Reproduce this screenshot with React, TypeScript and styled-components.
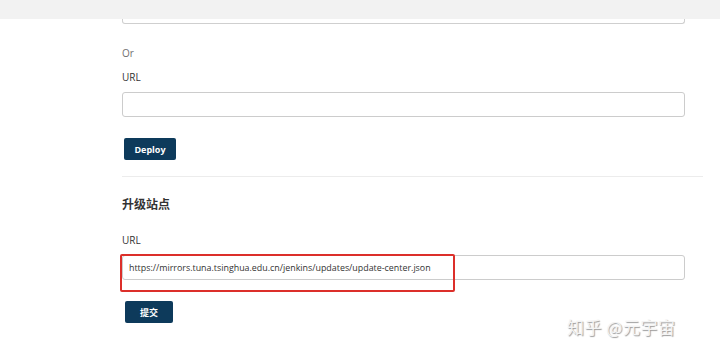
import styled, { createGlobalStyle } from 'styled-components';

const GlobalStyle = createGlobalStyle`
  html, body {
    margin: 0;
    padding: 0;
    background: #fff;
    font-family: "Open Sans", "Noto Sans", "Noto Sans CJK SC", sans-serif;
  }
`;

const Page = styled.div`
  position: relative;
  width: 720px;
  height: 359px;
  overflow: hidden;
  background: #fff;
`;

const Header = styled.div`
  height: 19px;
  background: #f2f2f2;
`;

const Content = styled.div`
  display: flex;
  flex-direction: column;
  align-items: flex-start;
  padding-left: 122px;
`;

const ClippedInput = styled.div`
  box-sizing: border-box;
  width: 563px;
  height: 5px;
  border: 1px solid #cfcfcf;
  border-top: none;
  border-radius: 0 0 3px 3px;
`;

const Hint = styled.div<{ $top: number }>`
  margin-top: ${p => p.$top}px;
  font-size: 10px;
  line-height: 14px;
  color: #707070;
`;

const Label = styled.div<{ $top: number }>`
  margin-top: ${p => p.$top}px;
  font-size: 10px;
  line-height: 14px;
  color: #333;
`;

const InputWrap = styled.div`
  position: relative;
  margin-top: 8px;
`;

const TextInput = styled.div`
  box-sizing: border-box;
  width: 563px;
  height: 25px;
  border: 1px solid #cccccc;
  border-radius: 3px;
  padding-left: 6px;
  display: flex;
  align-items: center;
  font-size: 8.9px;
  color: #333;
  white-space: nowrap;
`;

const Highlight = styled.div`
  position: absolute;
  left: -2px;
  top: -1px;
  width: 335px;
  height: 38px;
  box-sizing: border-box;
  border: 2px solid #dc2f2a;
  border-radius: 2px;
`;

const Button = styled.div<{ $left: number; $width: number }>`
  margin-top: 21px;
  margin-left: ${p => p.$left}px;
  width: ${p => p.$width}px;
  height: 22px;
  box-sizing: border-box;
  background: #0d3a5b;
  border-radius: 2px;
  color: #fff;
  font-size: 9px;
  font-weight: 700;
  display: flex;
  align-items: center;
  justify-content: center;
`;

const Divider = styled.div`
  margin-top: 16px;
  width: 581px;
  height: 1px;
  background: #ececec;
`;

const Heading = styled.div`
  margin-top: 20px;
  font-size: 12px;
  line-height: 16px;
  font-weight: 700;
  color: #333;
`;

const Watermark = styled.div`
  position: absolute;
  left: 567px;
  top: 316px;
  font-family: "Noto Sans CJK SC", sans-serif;
  font-size: 17px;
  line-height: 22px;
  color: #f4f4f4;
  text-shadow: 1px 1px 1px #9a9a9a;
  letter-spacing: 0.5px;
`;

export default function App() {
  return (
    <Page>
      <GlobalStyle />
      <Header />
      <Content>
        <ClippedInput />
        <Hint $top={22}>Or</Hint>
        <Label $top={10}>URL</Label>
        <InputWrap>
          <TextInput />
        </InputWrap>
        <Button $left={2} $width={52}>Deploy</Button>
        <Divider />
        <Heading>升级站点</Heading>
        <Label $top={20}>URL</Label>
        <InputWrap>
          <TextInput>https://mirrors.tuna.tsinghua.edu.cn/jenkins/updates/update-center.json</TextInput>
          <Highlight />
        </InputWrap>
        <Button $left={3} $width={48}>提交</Button>
      </Content>
      <Watermark>知乎 @元宇宙</Watermark>
    </Page>
  );
}
